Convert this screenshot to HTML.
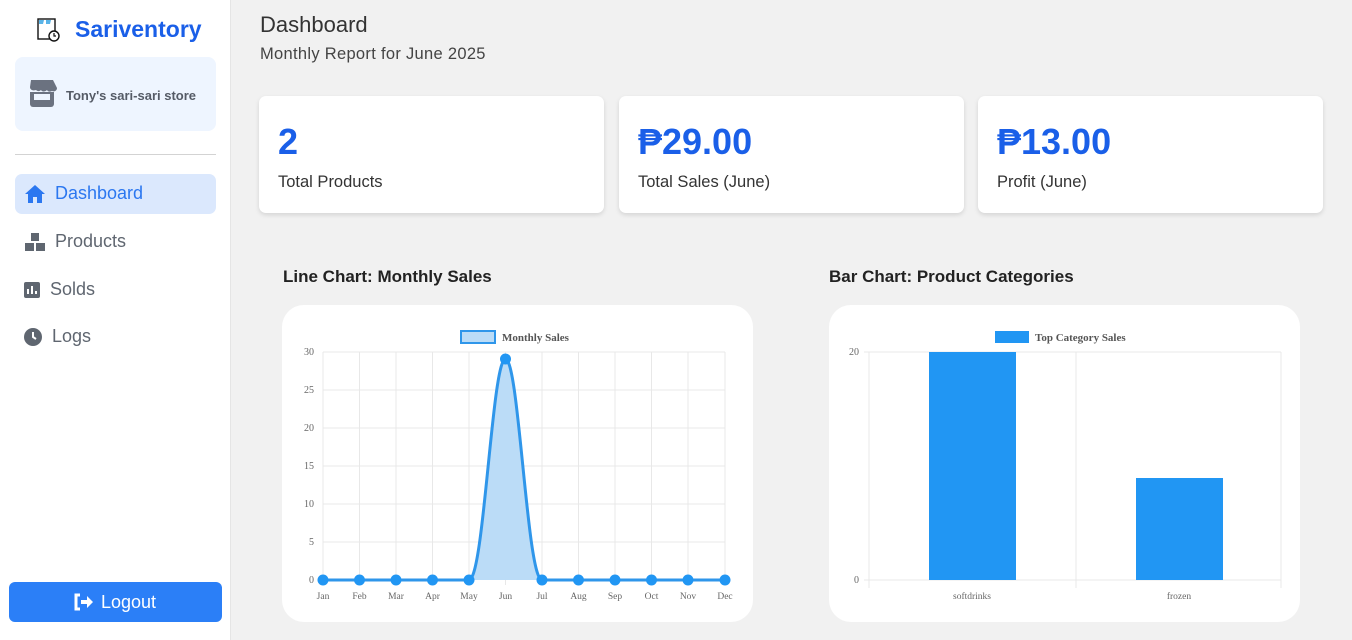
<!DOCTYPE html>
<html><head><meta charset="utf-8"><style>
*{box-sizing:border-box;margin:0;padding:0}
body{width:1352px;height:640px;background:#f1f1f1;font-family:"Liberation Sans","DejaVu Sans",sans-serif;position:relative;overflow:hidden;color:#333}
.side{position:absolute;left:0;top:0;width:231px;height:640px;background:#fff;border-right:1px solid #e5e5e5}
.brand{position:absolute;left:75px;top:16px;font-size:23px;font-weight:bold;color:#1a5fe8}
.store{position:absolute;left:15px;top:57px;width:201px;height:74px;background:#eef5ff;border-radius:8px}
.store span{position:absolute;left:51px;top:31px;font-size:13px;font-weight:bold;color:#555b66}
.hr{position:absolute;left:15px;top:154px;width:201px;height:1px;background:#d3d3d3}
.nav{position:absolute;left:15px;width:201px;height:40px;border-radius:7px;font-size:18px;color:#5f6670}
.nav span{position:absolute;top:9px}
.nav svg{position:absolute;top:10px;left:9px}
.act{background:#dbe8fd;color:#2b77f0}
.logout{position:absolute;left:9px;top:582px;width:213px;height:40px;background:#2b7ff7;border-radius:6px;color:#fff;font-size:18px}
h1{position:absolute;left:260px;top:12px;font-size:22px;font-weight:normal;color:#333}
.sub{position:absolute;left:260px;top:45px;font-size:16.5px;color:#444;letter-spacing:.3px}
.card{position:absolute;top:96px;width:345px;height:117px;background:#fff;border-radius:7px;box-shadow:0 2px 5px rgba(0,0,0,.12)}
.card b{position:absolute;left:19px;top:25px;font-size:36px;color:#1a5fe8}
.card span{position:absolute;left:19px;top:77px;font-size:16.5px;color:#333}
.ct{position:absolute;top:267px;font-size:17px;font-weight:bold;color:#222}
.chart{position:absolute;top:305px;width:471px;height:317px;background:#fff;border-radius:22px}
</style></head><body>
<div class="side">
<svg style="position:absolute;left:36px;top:17px" width="26" height="26" viewBox="0 0 26 26"><rect x="2" y="2" width="17" height="20" fill="none" stroke="#111" stroke-width="1.4"/><path d="M3 3h5l-1 4H3zM10 3h5l-1 4h-4z" fill="#5ab4e8"/><circle cx="18" cy="19" r="5" fill="#fff" stroke="#111" stroke-width="1.4"/><path d="M18 16v3h2" stroke="#111" fill="none" stroke-width="1.2"/></svg>
<div class="brand">Sariventory</div>
<div class="store"><svg style="position:absolute;left:12px;top:23px" width="30" height="28" viewBox="0 0 30 28"><path d="M4 0h22l4 8c0 3-3 4-5 3-2 1-4 1-5-1-2 2-5 2-6 0-2 2-4 1-5 0-3 1-6 0-6-3z" fill="#6b7280"/><path d="M3 12h24v12a3 3 0 0 1-3 3H6a3 3 0 0 1-3-3z" fill="#6b7280"/><rect x="7" y="14" width="16" height="6" fill="#eef5ff"/></svg><span>Tony's sari-sari store</span></div>
<div class="hr"></div>
<div class="nav act" style="top:174px"><svg width="22" height="20" viewBox="0 0 22 20"><path d="M11 1L1 10h3v9h5v-6h4v6h5v-9h3z" fill="#2b77f0"/></svg><span style="left:40px">Dashboard</span></div>
<div class="nav" style="top:222px"><svg width="22" height="20" viewBox="0 0 22 20"><rect x="7" y="1" width="8" height="8" fill="#5f6670"/><rect x="1" y="11" width="9" height="8" fill="#5f6670"/><rect x="12" y="11" width="9" height="8" fill="#5f6670"/></svg><span style="left:40px">Products</span></div>
<div class="nav" style="top:270px"><svg width="18" height="20" viewBox="0 0 18 20"><rect x="0" y="2" width="16" height="16" rx="2" fill="#5f6670"/><path d="M4 14V9M8 14V6M12 14v-3" stroke="#fff" stroke-width="2"/></svg><span style="left:35px">Solds</span></div>
<div class="nav" style="top:317px"><svg width="20" height="20" viewBox="0 0 20 20"><circle cx="9" cy="10" r="9" fill="#5f6670"/><path d="M9 5v5l3 2" stroke="#fff" stroke-width="2" fill="none"/></svg><span style="left:37px">Logs</span></div>
<div class="logout"><svg style="position:absolute;left:64px;top:11px" width="20" height="18" viewBox="0 0 20 18"><path d="M7 2H3v14h4" stroke="#fff" stroke-width="3" fill="none"/><path d="M8 7h6V3l6 6-6 6v-4H8z" fill="#fff"/></svg><span style="position:absolute;left:92px;top:10px">Logout</span></div>
</div>
<h1>Dashboard</h1>
<div class="sub">Monthly Report for June 2025</div>
<div class="card" style="left:259px"><b>2</b><span>Total Products</span></div>
<div class="card" style="left:619px"><b>₱29.00</b><span>Total Sales (June)</span></div>
<div class="card" style="left:978px"><b>₱13.00</b><span>Profit (June)</span></div>
<div class="ct" style="left:283px">Line Chart: Monthly Sales</div>
<div class="ct" style="left:829px">Bar Chart: Product Categories</div>
<div class="chart" style="left:282px"></div>
<div class="chart" style="left:829px"></div>
<svg style="position:absolute;left:0;top:0" width="1352" height="640" font-family="Liberation Serif,serif" font-size="10" fill="#666">
<g stroke="#e8e8e8" stroke-width="1">
<line x1="323" y1="352" x2="725" y2="352"/><line x1="323" y1="390" x2="725" y2="390"/><line x1="323" y1="428" x2="725" y2="428"/><line x1="323" y1="466" x2="725" y2="466"/><line x1="323" y1="504" x2="725" y2="504"/><line x1="323" y1="542" x2="725" y2="542"/>
<line x1="323" y1="352" x2="323" y2="585"/><line x1="359.5" y1="352" x2="359.5" y2="585"/><line x1="396" y1="352" x2="396" y2="585"/><line x1="432.5" y1="352" x2="432.5" y2="585"/><line x1="469" y1="352" x2="469" y2="585"/><line x1="505.5" y1="352" x2="505.5" y2="585"/><line x1="542" y1="352" x2="542" y2="585"/><line x1="578.5" y1="352" x2="578.5" y2="585"/><line x1="615" y1="352" x2="615" y2="585"/><line x1="651.5" y1="352" x2="651.5" y2="585"/><line x1="688" y1="352" x2="688" y2="585"/><line x1="725" y1="352" x2="725" y2="585"/>
<line x1="864" y1="352" x2="1281" y2="352"/><line x1="864" y1="580" x2="1281" y2="580"/><line x1="869" y1="352" x2="869" y2="588"/><line x1="1076" y1="352" x2="1076" y2="588"/><line x1="1281" y1="352" x2="1281" y2="588"/>
</g>
<g text-anchor="end"><text x="314" y="355">30</text><text x="314" y="393">25</text><text x="314" y="431">20</text><text x="314" y="469">15</text><text x="314" y="507">10</text><text x="314" y="545">5</text><text x="314" y="583">0</text><text x="859" y="355">20</text><text x="859" y="583">0</text></g>
<g text-anchor="middle" font-size="9.5"><text x="323" y="599">Jan</text><text x="359.5" y="599">Feb</text><text x="396" y="599">Mar</text><text x="432.5" y="599">Apr</text><text x="469" y="599">May</text><text x="505.5" y="599">Jun</text><text x="542" y="599">Jul</text><text x="578.5" y="599">Aug</text><text x="615" y="599">Sep</text><text x="651.5" y="599">Oct</text><text x="688" y="599">Nov</text><text x="725" y="599">Dec</text><text x="972" y="599">softdrinks</text><text x="1179" y="599">frozen</text></g>
<path d="M469 580C484 580 492 359 505.5 359C519 359 527 580 542 580Z" fill="#bbdcf7"/>
<path d="M323 580H469C484 580 492 359 505.5 359C519 359 527 580 542 580H725" stroke="#2f96ea" stroke-width="3" fill="none"/>
<g fill="#2196f3"><circle cx="323" cy="580" r="5.5"/><circle cx="359.5" cy="580" r="5.5"/><circle cx="396" cy="580" r="5.5"/><circle cx="432.5" cy="580" r="5.5"/><circle cx="469" cy="580" r="5.5"/><circle cx="505.5" cy="359" r="5.5"/><circle cx="542" cy="580" r="5.5"/><circle cx="578.5" cy="580" r="5.5"/><circle cx="615" cy="580" r="5.5"/><circle cx="651.5" cy="580" r="5.5"/><circle cx="688" cy="580" r="5.5"/><circle cx="725" cy="580" r="5.5"/>
<rect x="929" y="352" width="87" height="228"/><rect x="1136" y="478" width="87" height="102"/><rect x="995" y="331" width="34" height="12"/></g>
<rect x="461" y="331" width="34" height="12" fill="#bbdcf7" stroke="#2f96ea" stroke-width="2"/>
<g font-weight="bold" font-size="11" fill="#555"><text x="502" y="341">Monthly Sales</text><text x="1035" y="341">Top Category Sales</text></g>
</svg>
</body></html>
